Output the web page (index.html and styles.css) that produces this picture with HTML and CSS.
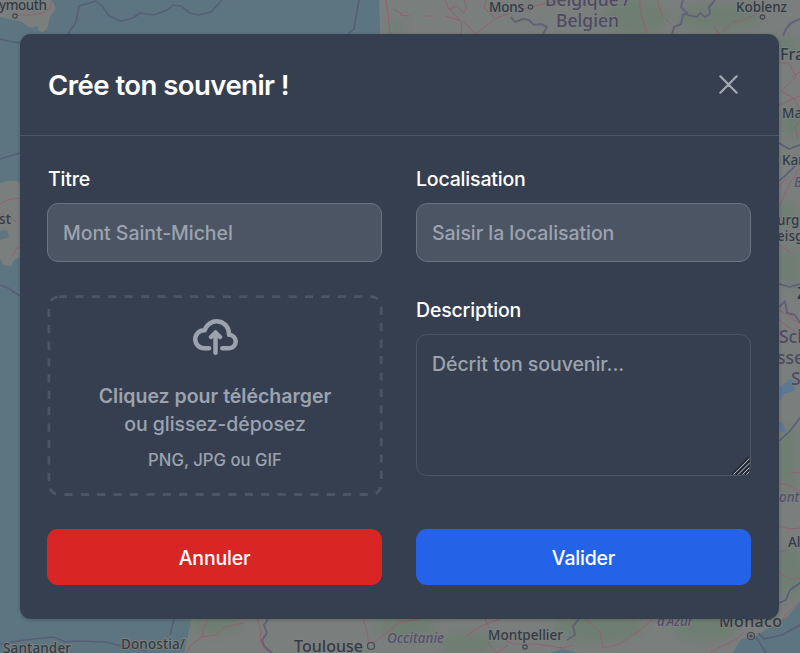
FILE: index.html
```html
<!DOCTYPE html>
<html lang="fr">
<head>
<meta charset="utf-8">
<title>Crée ton souvenir</title>
<link rel="stylesheet" href="styles.css">
</head>
<body>
<svg class="map" viewBox="0 0 800 653" aria-hidden="true">
  <defs>
    <filter id="soft" x="-20%" y="-20%" width="140%" height="140%"><feGaussianBlur stdDeviation="5"/></filter>
  </defs>
  <rect class="sea" width="800" height="653"/>
  <g class="land">
    <path d="M0 0H52L56 9 50 17 47 29 43 32 39 31 37 26 30 28 22 22 14 20 0 17Z"/>
    <path d="M379 0H800V653H184L187 640 193 612 390 300Z"/>
    <path d="M0 183 7 181 17 181 20 183V257L14 260 11 266 3 265 0 258Z"/>
  </g>
  <g class="wood" filter="url(#soft)">
    <ellipse cx="395" cy="29" rx="9" ry="5"/>
    <ellipse cx="635" cy="17" rx="33" ry="17"/>
    <ellipse cx="719" cy="18" rx="42" ry="13"/>
    <ellipse cx="784" cy="47" rx="14" ry="10"/>
    <ellipse cx="792" cy="123" rx="12" ry="14"/>
    <ellipse cx="786" cy="215" rx="9" ry="12"/>
    <ellipse cx="789" cy="268" rx="12" ry="18"/>
    <ellipse cx="788" cy="460" rx="10" ry="33"/>
    <ellipse cx="790" cy="572" rx="14" ry="27"/>
    <ellipse cx="215" cy="624" rx="25" ry="10"/>
    <ellipse cx="406" cy="627" rx="30" ry="10"/>
    <ellipse cx="467" cy="643" rx="30" ry="10"/>
    <ellipse cx="598" cy="628" rx="46" ry="14"/>
    <ellipse cx="705" cy="628" rx="33" ry="13"/>
  </g>
  <g class="sea">
    <path d="M800 602 787 617 772 626 756 636 741 639 733 653H800Z"/>
    <path d="M0 231 7 230 9 237 0 240Z"/>
    <path d="M550 653 562 649 577 653Z"/>
  </g>
  <g class="lake">
    <path d="M779 388 790 379 797 382 794 391 784 394 780 401Z"/>
    <path d="M779 421 784 425 785 433 780 431Z"/>
  </g>
  <g class="border">
    <path d="M68 34 76 22 79 6 96 1 103 7 109 16 121 21 133 18 140 13 154 15 167 10 173 5 181 6 190 13 199 15 211 12 222 0"/>
    <path d="M359 0 357 12 354 29 348 34M0 39 8 41 20 43M0 159 20 153M0 285 8 288 20 296"/>
    <path d="M0 644 24 640 53 637 66 642 75 641 106 642 124 647 147 651M174 619 170 635"/>
    <path d="M779 143 789 149 800 145M779 181 787 174 800 161M779 284 790 287 800 284"/>
    <path d="M779 441 790 431 800 418M779 603 786 600 790 590 800 583M756 637 766 653M758 633 764 639 782 635 800 625"/>
  </g>
  <g class="frontier">
    <path d="M511 17 515 22 523 19 529 20 534 25 541 24 547 27 543 34M672 34 674 27 681 24 683 15 687 13 681 7 683 0"/>
    <path d="M687 15 697 17 700 13 705 17 710 14 709 7 715 0M800 19 791 23 786 29 783 36"/>
    <path d="M268 619 264 625 267 633 262 640 264 646 272 653M579 619 573 626 575 635 567 640"/>
    <path d="M779 307 785 301 787 313 795 315 800 323"/>
  </g>
  <g class="road">
    <path d="M52 0 50 8 43 13 31 15 17 15M386 0 388 13 390 34M393 9 402 14"/>
    <path d="M445 0 449 9 462 22 461 34M449 9 457 6 463 13 467 8 464 0M463 21 476 34 496 18 523 9 560 0M462 21 445 16M494 17 484 8 486 0"/>
    <path d="M400 15 410 16M425 16 433 16M640 0 640 9 647 33M657 0 662 15 671 24M759 8 757 14 744 20 733 22 722 32M714 26 719 34"/>
    <path d="M779 63 789 63 796 77 781 91 793 98 800 109M779 105 800 96M792 77 800 72"/>
    <path d="M800 121 795 127 798 139M779 207 789 185 800 168M779 187 786 178M779 245 791 253"/>
    <path d="M779 310 788 315 799 324M779 320 800 335M779 483 790 486 800 492M779 526 789 529 800 528M779 552 788 550M779 573 790 579 800 578M790 472 800 473"/>
    <path d="M187 653 190 646 202 637 204 627 208 619M202 637 216 635 225 627 243 623M257 619 261 631 260 642 268 653"/>
    <path d="M363 619 367 632 369 646 385 634 400 622 421 619M485 619 490 630 489 645M489 645 497 653 508 645M466 636 483 625 500 619M497 637 513 644 535 644 563 648 573 645M585 619 600 632 603 648M603 648 620 644 632 635 641 630 652 619M710 653 718 648 735 640 744 632"/>
    <path d="M779 626 786 614 800 602M0 204 7 200 20 198M0 213 10 218 17 222M12 256 16 249 20 247"/>
  </g>
  <g class="town">
    <circle cx="15" cy="16" r="2.2"/><circle cx="530.500" cy="7" r="2.2"/><circle cx="762.500" cy="17" r="2.2"/><circle cx="371" cy="646" r="3.500"/><circle cx="525" cy="647" r="2.200"/><circle cx="751" cy="636" r="3.500"/><circle class="core" cx="751" cy="636" r="1"/>
  </g>
  <g class="label">
    <text x="-1" y="10" textLength="48">ymouth</text>
    <text x="489" y="12" textLength="35">Mons</text>
    <text x="736" y="12" textLength="51">Koblenz</text>
    <text x="-1" y="224" textLength="12">st</text>
    <text x="3" y="653" textLength="68">Santander</text>
    <text x="121" y="649" textLength="64">Donostia/</text>
    <text x="488" y="640" textLength="75">Montpellier</text>
    <text x="782" y="118">Ma</text>
    <text x="782" y="165">Kar</text>
    <text x="777" y="225">urg</text>
    <text x="777" y="241">eisg</text>
    <text x="788" y="547">Al</text>
  </g>
  <g class="label city">
    <text x="294" y="652" textLength="69">Toulouse</text>
    <text x="780" y="60">Fra</text>
    <text x="719" y="627" textLength="63">Monaco</text>
    <text x="797" y="299">Z</text>
  </g>
  <g class="label country">
    <text x="545" y="6" textLength="85">Belgique /</text>
    <text x="556" y="27" textLength="63">Belgien</text>
    <text x="779" y="343">Sch</text>
    <text x="777" y="364">sse</text>
    <text x="791" y="385">S</text>
  </g>
  <g class="label region">
    <text x="387" y="643" textLength="57">Occitanie</text>
    <text x="657" y="626" textLength="36">d'Azur</text>
    <text x="794" y="187">B</text>
    <text x="779" y="502">onte</text>
  </g>
</svg>
<main class="modal">
  <header class="modal-header">
    <h1>Crée ton souvenir !</h1>
    <button class="close" type="button" aria-label="Fermer">
      <svg viewBox="0 0 14 14"><path d="m1 1 6 6m0 0 6 6M7 7l6-6M7 7l-6 6"/></svg>
    </button>
  </header>
  <form class="modal-body">
    <div class="field">
      <label class="first" for="titre">Titre</label>
      <input id="titre" type="text" placeholder="Mont Saint-Michel">
    </div>
    <div class="field">
      <label for="lieu">Localisation</label>
      <input id="lieu" type="text" placeholder="Saisir la localisation">
    </div>
    <div class="dropzone">
      <svg class="dash" viewBox="0 0 336 201"><rect x="1.900" y="1.700" width="332.300" height="197.800" rx="10"/></svg>
      <svg class="cloud" viewBox="0 0 20 16"><path d="M13 13h3a3 3 0 0 0 0-6h-.025A5.560 5.560 0 0 0 16 6.500 5.500 5.500 0 0 0 5.207 5.021C5.137 5.017 5.071 5 5 5a4 4 0 0 0 0 8h2.167M10 15V6m0 0L8 8m2-2 2 2"/></svg>
      <p class="lead"><strong>Cliquez pour télécharger</strong><span>ou glissez-déposez</span></p>
      <p class="formats">PNG, JPG ou GIF</p>
    </div>
    <div class="field description">
      <label for="desc">Description</label>
      <div class="area">
        <textarea id="desc" placeholder="Décrit ton souvenir..."></textarea>
        <svg class="grip" viewBox="0 0 18 18">
          <path class="shade" d="M-.5 17.500 17.500 -.5M4 17.500 17.500 4M8.500 17.500 17.500 8.500M13 17.500 17.500 13"/>
          <path d="M1.500 17.500 17.500 1.500M6 17.500 17.500 6M10.500 17.500 17.500 10.500M14.500 17.500 17.500 14.500"/>
        </svg>
      </div>
    </div>
    <button class="btn cancel" type="button">Annuler</button>
    <button class="btn submit" type="button">Valider</button>
  </form>
</main>
</body>
</html>
```

FILE: styles.css
```css
* { box-sizing: border-box; }
body {
  margin: 0;
  width: 800px;
  height: 653px;
  overflow: hidden;
  padding: 34px 21px 34px 20px;
  font-family: Inter, "Liberation Sans", sans-serif;
  color: #fff;
}
h1, p { margin: 0; }

.map { position: absolute; inset: 0; width: 800px; height: 653px; }
.sea { fill: #5c7580; }
.land { fill: #7a7e7d; }
.wood { fill: #6b7e70; opacity: .75; }
.lake { fill: #5b7895; }
.border, .frontier, .road { fill: none; stroke-linejoin: round; }
.border { stroke: #575f76; stroke-width: 1.6; }
.frontier { stroke: #646177; stroke-width: 2; }
.road { stroke: #93616e; stroke-width: 1; }
.town { fill: #7a7e7d; stroke: #41464e; stroke-width: 1.2; }
.town .core { fill: #41464e; }
.label {
  font: 500 13.500px "Noto Sans", sans-serif;
  fill: #343a43;
  stroke: #7a8180;
  stroke-width: 2px;
  paint-order: stroke;
}
.city { font-size: 16px; }
.country { font-size: 17.500px; fill: #504960; }
.region { font-size: 13.500px; font-style: italic; fill: #57506a; }

.modal {
  position: relative;
  height: 585px;
  border-radius: 11px;
  background: #363f4f;
  box-shadow: 0 1px 4px rgba(0, 0, 0, .2);
}
.modal-header {
  height: 102px;
  padding: 0 41px 0 28px;
  display: flex;
  align-items: center;
  justify-content: space-between;
  border-bottom: 1px solid #4b5563;
}
h1 { font-size: 27.500px; line-height: 40px; font-weight: 600; letter-spacing: -.53px; padding-top: 1px; }
.close { padding: 0; border: 0; background: none; width: 19px; height: 19px; }
.close svg { display: block; width: 19px; height: 19px; fill: none; stroke: #a3aab5; stroke-width: 1.6; stroke-linecap: round; }

.modal-body {
  display: grid;
  grid-template-columns: 335px 335px;
  grid-template-rows: 93px 201px 56px;
  gap: 33px 34px;
  padding: 33px 28px 0 27px;
}
.field { display: flex; flex-direction: column; }
label { font-size: 19.500px; line-height: 20px; font-weight: 550; letter-spacing: -.18px; margin-bottom: 14px; }
.first { padding-left: 1px; }
input, textarea {
  font: 450 19.500px/28px Inter, sans-serif;
  letter-spacing: -.06px;
  color: #fff;
  padding: 0 15px;
  outline: 0;
  width: 100%;
  border-radius: 11px;
  border: 1.4px solid #6b7280;
  background: #4b5563;
}
input { height: 59px; }
::placeholder { color: #9ca3af; opacity: 1; }
.area { position: relative; height: 142px; }
textarea { display: block; height: 142px; padding-top: 15px; background: transparent; border-color: #4b5563; resize: none; }
.description label { margin-bottom: 0; padding-top: 5px; height: 39px; }
.grip { position: absolute; right: 1px; bottom: 1px; width: 18px; height: 18px; fill: none; stroke: #aeb3ba; stroke-width: 1; }
.grip .shade { stroke: #1e242d; stroke-width: 1.2; }

.dropzone { position: relative; display: flex; flex-direction: column; align-items: center; padding: 24px 0 0 1px; color: #9ca3af; }
.dash { position: absolute; left: 0; top: 0; width: 336px; height: 201px; fill: none; stroke: #4b5563; stroke-width: 2.8; stroke-dasharray: 8.200 8.200; }
.cloud { width: 45px; height: 36px; fill: none; stroke: #9ca3af; stroke-width: 2; stroke-linecap: round; stroke-linejoin: round; }
.lead { display: flex; flex-direction: column; align-items: center; margin-top: 27px; font-size: 19.500px; line-height: 28px; font-weight: 450; letter-spacing: -.06px; }
.lead strong { font-weight: 600; letter-spacing: 0; }
.formats { margin-top: 11px; font-size: 16.700px; line-height: 22px; font-weight: 450; }

.btn { border: 0; border-radius: 11px; padding: 2px 0 0; color: #fff; font: 550 19.500px/28px Inter, sans-serif; letter-spacing: -.2px; }
.cancel { background: #d92524; }
.submit { background: #2463e8; }
```
